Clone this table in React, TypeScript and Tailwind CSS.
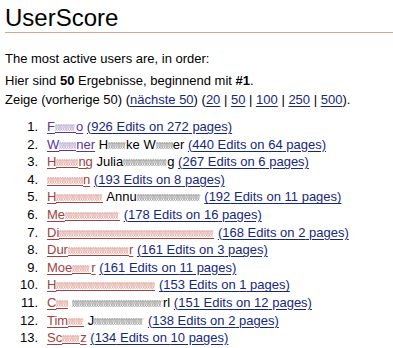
import React from 'react';

// A part is either visible text or the width of a blotted-out stretch
type Part = string | number;

type Row = {
  user: Part[];
  real?: Part[];
  edits: number;
  pages: number;
  visited?: boolean;
};

const rows: Row[] = [
  { user: ['F', 21, 'o'], edits: 926, pages: 272, visited: true },
  { user: ['W', 17, 'ner'], real: ['H', 18, 'ke W', 17, 'er'], edits: 440, pages: 64, visited: true },
  { user: ['H', 22, 'ng'], real: ['Julia', 44, 'g'], edits: 267, pages: 6 },
  { user: [36, 'n'], edits: 193, pages: 8 },
  { user: ['H', 47], real: ['Annu', 64], edits: 192, pages: 11 },
  { user: ['Me', 55], edits: 178, pages: 16 },
  { user: ['Di', 155], edits: 168, pages: 2 },
  { user: ['Dur', 61, 'r'], edits: 161, pages: 3 },
  { user: ['Moe', 19, 'r'], edits: 161, pages: 11 },
  { user: ['H', 99], edits: 153, pages: 1 },
  { user: ['C', 12], real: [91, 'rl'], edits: 151, pages: 12 },
  { user: ['Tim', 16], real: ['J', 50], edits: 138, pages: 2 },
  { user: ['Sc', 18, 'z'], edits: 134, pages: 10 },
];

// little cursive loops, like a scrawled-over word
const coil = (w: number) => {
  const step = 2.4;
  let d = 'M0 10.5';
  for (let x = 0; x + step <= w; x += step) {
    d += ` C${x + 2.4} 10.5 ${x + 2.6} 4.5 ${x + 1.4} 4.5 C${x + 0.4} 4.5 ${x + 0.6} 10.5 ${x + step} 10.5`;
  }
  return d;
};

const tones = {
  red: { coil: '#e2a59c', dark: '#b9574d', line: '#a54040' },
  purple: { coil: '#b7a9d2', dark: '#7a62a8', line: '#5a3696' },
  black: { coil: '#9a9a9a', dark: '#333333', line: '#222222' },
};

const Scribble = ({ w, tone, underline }: { w: number; tone: keyof typeof tones; underline?: boolean }) => {
  const c = tones[tone];
  return (
    <svg width={w} height={14} viewBox={`0 0 ${w} 14`} className="inline-block align-[-3px]">
      <path d={coil(w)} fill="none" stroke={c.coil} strokeWidth={0.9} />
      <path d={`M0 5 L${w} 5`} stroke={c.dark} strokeWidth={0.6} opacity={0.35} />
      {underline && <path d={`M0 12.5 L${w} 12.5`} stroke={c.line} strokeWidth={1} />}
    </svg>
  );
};

const Parts = ({ parts, tone, underline }: { parts: Part[]; tone: keyof typeof tones; underline?: boolean }) => (
  <>
    {parts.map((p, i) =>
      typeof p === 'number' ? <Scribble key={i} w={p} tone={tone} underline={underline} /> : <span key={i}>{p}</span>
    )}
  </>
);

const NavLink = ({ children }: { children: React.ReactNode }) => (
  <a className="text-[#16287a] underline underline-offset-[2px]">{children}</a>
);

export default function App() {
  return (
    <div className="w-[393px] h-[348px] overflow-hidden bg-white text-black text-[13px] font-['Liberation_Sans',Arial,sans-serif]">
      {/* page heading */}
      <h1 className="ml-[5px] pt-[4px] text-[24px] leading-[28px] border-b border-[#d9a58f]">UserScore</h1>

      <div className="px-[5px]">
        <p className="mt-[16px] leading-[19px]">The most active users are, in order:</p>
        <p className="mt-[3px] leading-[19px]">
          Hier sind <b>50</b> Ergebnisse, beginnend mit <b>#1</b>.
          <br />
          Zeige (vorherige 50) (<NavLink>nächste 50</NavLink>) (<NavLink>20</NavLink> | <NavLink>50</NavLink> |{' '}
          <NavLink>100</NavLink> | <NavLink>250</NavLink> | <NavLink>500</NavLink>).
        </p>
      </div>

      {/* ranking */}
      <ol className="mt-[9px]">
        {rows.map((r, i) => (
          <li key={i} className="flex leading-[17.6px] whitespace-nowrap">
            <span className="w-[38px] shrink-0 text-right">{i + 1}.</span>
            <span className="ml-[9px]">
              <a
                className={
                  (r.visited ? 'text-[#5a3696]' : 'text-[#a54040]') + ' underline underline-offset-[2px]'
                }
              >
                <Parts parts={r.user} tone={r.visited ? 'purple' : 'red'} underline />
              </a>
              {r.real && (
                <>
                  {' '}
                  <Parts parts={r.real} tone="black" />
                </>
              )}{' '}
              <NavLink>
                ({r.edits} Edits on {r.pages} pages)
              </NavLink>
            </span>
          </li>
        ))}
      </ol>
    </div>
  );
}
